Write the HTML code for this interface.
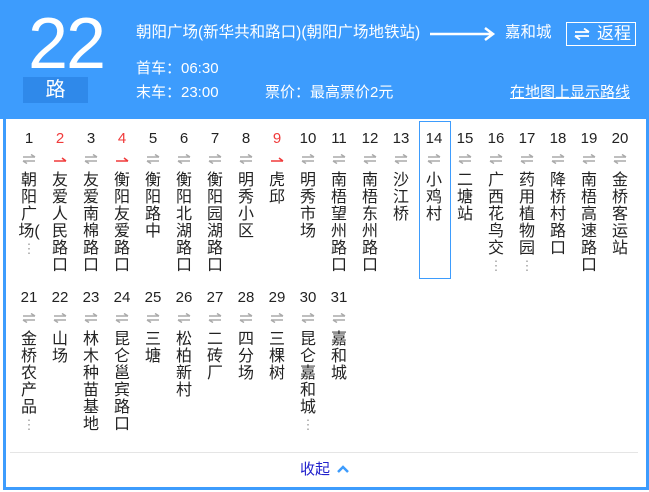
<!DOCTYPE html>
<html><head><meta charset="utf-8"><style>
*{margin:0;padding:0}
body{width:649px;height:492px;overflow:hidden;background:#fff;font-family:"Liberation Sans","Noto Sans CJK SC",sans-serif;position:relative}
.hd{position:absolute;left:0;top:0;width:649px;height:119px;background:#3d9cfd;color:#fff}
.box{position:absolute;left:3px;top:119px;width:640px;height:368px;border:3px solid #3d9cfd;border-top:none}
.big{position:absolute;left:28px;top:4px;font-size:72px;line-height:80px;letter-spacing:-2px}
.lu{position:absolute;left:23px;top:77px;width:65px;height:26px;background:#2f89ea;font-size:20px;line-height:26px;text-align:center}
.t1{position:absolute;font-size:15px;line-height:20px;white-space:nowrap}
.btn{position:absolute;left:566px;top:22px;width:68px;height:22px;border:1px solid #fff;font-size:17px;line-height:22px}
.c{position:absolute;width:30px;text-align:center;color:#222}
.n{font-size:15px;line-height:18px;height:18px}
.red{color:#f03a3a}
.c svg{display:block;margin:6px auto 0;width:14px;height:10px}
.t{font-size:16px;line-height:17px;margin-top:7.5px}
.d{color:#999;font-size:13px;line-height:14px}
</style></head><body>
<div class="hd">
<div class="big">22</div>
<div class="lu">路</div>
<div class="t1" style="left:136px;top:23px;font-size:15.5px">朝阳广场(新华共和路口)(朝阳广场地铁站)</div>
<svg style="position:absolute;left:430px;top:26px" width="66" height="16"><path d="M0 8H63M55 2L63 8L55 14" stroke="#fff" stroke-width="2.5" fill="none"/></svg>
<div class="t1" style="left:505px;top:23px;font-size:15.5px">嘉和城</div>
<div class="btn"><svg style="position:absolute;left:7px;top:5px" width="16" height="12"><path d="M1 4H15M10 0.5L15 4M1 8H15M1 8L6 11.5" stroke="#fff" stroke-width="1.8" fill="none"/></svg><span style="position:absolute;left:30px;top:0">返程</span></div>
<div class="t1" style="left:136px;top:59px">首车：06:30</div>
<div class="t1" style="left:136px;top:83px">末车：23:00</div>
<div class="t1" style="left:265px;top:83px">票价：最高票价2元</div>
<div class="t1" style="left:510px;top:83px;text-decoration:underline">在地图上显示路线</div>
</div>
<div class="box"></div>
<div style="position:absolute;left:419px;top:121px;width:30px;height:156px;border:1px solid #3d9cfd"></div>
<div style="position:absolute;left:10px;top:452px;width:628px;height:1px;background:#e5e5e5"></div>
<div style="position:absolute;left:300px;top:460px;font-size:15px;line-height:20px;color:#2222cc">收起</div>
<svg style="position:absolute;left:337px;top:465px" width="12" height="9"><path d="M1 7L6 2L11 7" stroke="#3d9cfd" stroke-width="2.5" fill="none"/></svg>

<div class="c" style="left:14px;top:130px"><div class="n">1</div><svg><path d="M1 3H13M9 0.5L13 3M1 7H13M1 7L5 9.5" stroke="#aaa" stroke-width="1.5" fill="none"/></svg><div class="t">朝<br>阳<br>广<br>场(<br><span class="d">⋮</span></div></div>
<div class="c" style="left:45px;top:130px"><div class="n red">2</div><svg><path d="M1 7H13M9 4L13 7" stroke="#f03a3a" stroke-width="1.5" fill="none"/></svg><div class="t">友<br>爱<br>人<br>民<br>路<br>口</div></div>
<div class="c" style="left:76px;top:130px"><div class="n">3</div><svg><path d="M1 3H13M9 0.5L13 3M1 7H13M1 7L5 9.5" stroke="#aaa" stroke-width="1.5" fill="none"/></svg><div class="t">友<br>爱<br>南<br>棉<br>路<br>口</div></div>
<div class="c" style="left:107px;top:130px"><div class="n red">4</div><svg><path d="M1 7H13M9 4L13 7" stroke="#f03a3a" stroke-width="1.5" fill="none"/></svg><div class="t">衡<br>阳<br>友<br>爱<br>路<br>口</div></div>
<div class="c" style="left:138px;top:130px"><div class="n">5</div><svg><path d="M1 3H13M9 0.5L13 3M1 7H13M1 7L5 9.5" stroke="#aaa" stroke-width="1.5" fill="none"/></svg><div class="t">衡<br>阳<br>路<br>中</div></div>
<div class="c" style="left:169px;top:130px"><div class="n">6</div><svg><path d="M1 3H13M9 0.5L13 3M1 7H13M1 7L5 9.5" stroke="#aaa" stroke-width="1.5" fill="none"/></svg><div class="t">衡<br>阳<br>北<br>湖<br>路<br>口</div></div>
<div class="c" style="left:200px;top:130px"><div class="n">7</div><svg><path d="M1 3H13M9 0.5L13 3M1 7H13M1 7L5 9.5" stroke="#aaa" stroke-width="1.5" fill="none"/></svg><div class="t">衡<br>阳<br>园<br>湖<br>路<br>口</div></div>
<div class="c" style="left:231px;top:130px"><div class="n">8</div><svg><path d="M1 3H13M9 0.5L13 3M1 7H13M1 7L5 9.5" stroke="#aaa" stroke-width="1.5" fill="none"/></svg><div class="t">明<br>秀<br>小<br>区</div></div>
<div class="c" style="left:262px;top:130px"><div class="n red">9</div><svg><path d="M1 7H13M9 4L13 7" stroke="#f03a3a" stroke-width="1.5" fill="none"/></svg><div class="t">虎<br>邱</div></div>
<div class="c" style="left:293px;top:130px"><div class="n">10</div><svg><path d="M1 3H13M9 0.5L13 3M1 7H13M1 7L5 9.5" stroke="#aaa" stroke-width="1.5" fill="none"/></svg><div class="t">明<br>秀<br>市<br>场</div></div>
<div class="c" style="left:324px;top:130px"><div class="n">11</div><svg><path d="M1 3H13M9 0.5L13 3M1 7H13M1 7L5 9.5" stroke="#aaa" stroke-width="1.5" fill="none"/></svg><div class="t">南<br>梧<br>望<br>州<br>路<br>口</div></div>
<div class="c" style="left:355px;top:130px"><div class="n">12</div><svg><path d="M1 3H13M9 0.5L13 3M1 7H13M1 7L5 9.5" stroke="#aaa" stroke-width="1.5" fill="none"/></svg><div class="t">南<br>梧<br>东<br>州<br>路<br>口</div></div>
<div class="c" style="left:386px;top:130px"><div class="n">13</div><svg><path d="M1 3H13M9 0.5L13 3M1 7H13M1 7L5 9.5" stroke="#aaa" stroke-width="1.5" fill="none"/></svg><div class="t">沙<br>江<br>桥</div></div>
<div class="c" style="left:419px;top:130px"><div class="n">14</div><svg><path d="M1 3H13M9 0.5L13 3M1 7H13M1 7L5 9.5" stroke="#aaa" stroke-width="1.5" fill="none"/></svg><div class="t">小<br>鸡<br>村</div></div>
<div class="c" style="left:450px;top:130px"><div class="n">15</div><svg><path d="M1 3H13M9 0.5L13 3M1 7H13M1 7L5 9.5" stroke="#aaa" stroke-width="1.5" fill="none"/></svg><div class="t">二<br>塘<br>站</div></div>
<div class="c" style="left:481px;top:130px"><div class="n">16</div><svg><path d="M1 3H13M9 0.5L13 3M1 7H13M1 7L5 9.5" stroke="#aaa" stroke-width="1.5" fill="none"/></svg><div class="t">广<br>西<br>花<br>鸟<br>交<br><span class="d">⋮</span></div></div>
<div class="c" style="left:512px;top:130px"><div class="n">17</div><svg><path d="M1 3H13M9 0.5L13 3M1 7H13M1 7L5 9.5" stroke="#aaa" stroke-width="1.5" fill="none"/></svg><div class="t">药<br>用<br>植<br>物<br>园<br><span class="d">⋮</span></div></div>
<div class="c" style="left:543px;top:130px"><div class="n">18</div><svg><path d="M1 3H13M9 0.5L13 3M1 7H13M1 7L5 9.5" stroke="#aaa" stroke-width="1.5" fill="none"/></svg><div class="t">降<br>桥<br>村<br>路<br>口</div></div>
<div class="c" style="left:574px;top:130px"><div class="n">19</div><svg><path d="M1 3H13M9 0.5L13 3M1 7H13M1 7L5 9.5" stroke="#aaa" stroke-width="1.5" fill="none"/></svg><div class="t">南<br>梧<br>高<br>速<br>路<br>口</div></div>
<div class="c" style="left:605px;top:130px"><div class="n">20</div><svg><path d="M1 3H13M9 0.5L13 3M1 7H13M1 7L5 9.5" stroke="#aaa" stroke-width="1.5" fill="none"/></svg><div class="t">金<br>桥<br>客<br>运<br>站</div></div>

<div class="c" style="left:14px;top:289px"><div class="n">21</div><svg><path d="M1 3H13M9 0.5L13 3M1 7H13M1 7L5 9.5" stroke="#aaa" stroke-width="1.5" fill="none"/></svg><div class="t">金<br>桥<br>农<br>产<br>品<br><span class="d">⋮</span></div></div>
<div class="c" style="left:45px;top:289px"><div class="n">22</div><svg><path d="M1 3H13M9 0.5L13 3M1 7H13M1 7L5 9.5" stroke="#aaa" stroke-width="1.5" fill="none"/></svg><div class="t">山<br>场</div></div>
<div class="c" style="left:76px;top:289px"><div class="n">23</div><svg><path d="M1 3H13M9 0.5L13 3M1 7H13M1 7L5 9.5" stroke="#aaa" stroke-width="1.5" fill="none"/></svg><div class="t">林<br>木<br>种<br>苗<br>基<br>地</div></div>
<div class="c" style="left:107px;top:289px"><div class="n">24</div><svg><path d="M1 3H13M9 0.5L13 3M1 7H13M1 7L5 9.5" stroke="#aaa" stroke-width="1.5" fill="none"/></svg><div class="t">昆<br>仑<br>邕<br>宾<br>路<br>口</div></div>
<div class="c" style="left:138px;top:289px"><div class="n">25</div><svg><path d="M1 3H13M9 0.5L13 3M1 7H13M1 7L5 9.5" stroke="#aaa" stroke-width="1.5" fill="none"/></svg><div class="t">三<br>塘</div></div>
<div class="c" style="left:169px;top:289px"><div class="n">26</div><svg><path d="M1 3H13M9 0.5L13 3M1 7H13M1 7L5 9.5" stroke="#aaa" stroke-width="1.5" fill="none"/></svg><div class="t">松<br>柏<br>新<br>村</div></div>
<div class="c" style="left:200px;top:289px"><div class="n">27</div><svg><path d="M1 3H13M9 0.5L13 3M1 7H13M1 7L5 9.5" stroke="#aaa" stroke-width="1.5" fill="none"/></svg><div class="t">二<br>砖<br>厂</div></div>
<div class="c" style="left:231px;top:289px"><div class="n">28</div><svg><path d="M1 3H13M9 0.5L13 3M1 7H13M1 7L5 9.5" stroke="#aaa" stroke-width="1.5" fill="none"/></svg><div class="t">四<br>分<br>场</div></div>
<div class="c" style="left:262px;top:289px"><div class="n">29</div><svg><path d="M1 3H13M9 0.5L13 3M1 7H13M1 7L5 9.5" stroke="#aaa" stroke-width="1.5" fill="none"/></svg><div class="t">三<br>棵<br>树</div></div>
<div class="c" style="left:293px;top:289px"><div class="n">30</div><svg><path d="M1 3H13M9 0.5L13 3M1 7H13M1 7L5 9.5" stroke="#aaa" stroke-width="1.5" fill="none"/></svg><div class="t">昆<br>仑<br>嘉<br>和<br>城<br><span class="d">⋮</span></div></div>
<div class="c" style="left:324px;top:289px"><div class="n">31</div><svg><path d="M1 3H13M9 0.5L13 3M1 7H13M1 7L5 9.5" stroke="#aaa" stroke-width="1.5" fill="none"/></svg><div class="t">嘉<br>和<br>城</div></div>
</body></html>
